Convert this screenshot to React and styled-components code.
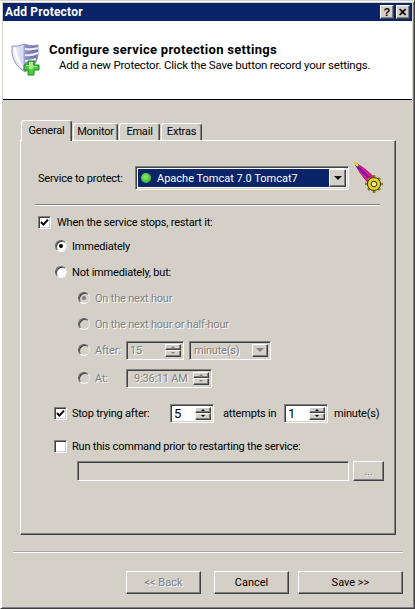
import React from "react";
import styled, { createGlobalStyle, css } from "styled-components";

const Global = createGlobalStyle`
  html, body { margin: 0; padding: 0; background: #d4d0c8; }
  * { box-sizing: border-box; }
`;

const FONT = `Roboto, "Liberation Sans", Arial, sans-serif`;
const raised = css`
  border: 1px solid;
  border-color: #fff #404040 #404040 #fff;
  box-shadow: inset -1px -1px 0 #808080;
  background: #d4d0c8;
`;
const sunken = css`
  border: 1px solid;
  border-color: #808080 #fff #fff #808080;
  box-shadow: inset 1px 1px 0 #404040, inset -1px -1px 0 #d4d0c8;
`;

const Win = styled.div`
  width: 415px;
  height: 609px;
  padding: 2px;
  background: #d4d0c8;
  border: 1px solid;
  border-color: #d4d0c8 #404040 #404040 #fff;
  box-shadow: inset 1px 1px 0 #fff, inset -1px -1px 0 #808080;
  font: 11px ${FONT};
  letter-spacing: -0.2px;
  color: #000;
  overflow: hidden;
  display: flex;
  flex-direction: column;
`;
const TitleBar = styled.div`
  height: 18px;
  flex: none;
  background: #0a246a;
  display: flex;
  align-items: center;
  padding: 0 2px;
  color: #fff;
  font: 700 12px ${FONT};
  letter-spacing: 0.2px;
`;
const TitleText = styled.span`
  flex: 1;
`;
const CapBtn = styled.span`
  ${raised}
  width: 14px;
  height: 14px;
  margin-left: 2px;
  display: flex;
  align-items: center;
  justify-content: center;
  color: #000;
  font: 700 11px "Liberation Sans", sans-serif;
`;
const Header = styled.div`
  height: 79px;
  flex: none;
  background: #fff;
  border-bottom: 1px solid #000;
  display: flex;
  padding: 21px 0 0 8px;
`;
const ShieldWrap = styled.span`
  margin-top: 1px;
  height: 33px;
  flex: none;
`;
const HeadText = styled.div`
  margin-left: 8px;
`;
const HeadTitle = styled.div`
  font-weight: 700;
  font-size: 13px;
  line-height: 16px;
  letter-spacing: 0.3px;
`;
const HeadSub = styled.div`
  margin-left: 10px;
  line-height: 14px;
  font-size: 11.5px;
`;
const Body = styled.div`
  flex: 1;
  padding: 20px 0 0 17px;
`;
const TabStrip = styled.div`
  height: 20px;
  display: flex;
  align-items: flex-end;
  position: relative;
  z-index: 1;
  padding-left: 1px;
`;
const Tab = styled.div`
  height: ${(p) => (p.$active ? 21 : 17)}px;
  width: ${(p) => p.$w}px;
  margin-right: 1px;
  margin-bottom: ${(p) => (p.$active ? -1 : 0)}px;
  background: #d4d0c8;
  border: 1px solid;
  border-color: #fff #404040 transparent #fff;
  border-bottom: none;
  border-radius: 3px 3px 0 0;
  box-shadow: inset -1px 0 0 #808080;
  display: flex;
  justify-content: center;
  align-items: center;
  line-height: 14px;
`;
const Panel = styled.div`
  width: 376px;
  height: 395px;
  border: 1px solid;
  border-color: #fff #404040 #404040 #fff;
  box-shadow: inset -1px -1px 0 #808080;
  padding: 25px 0 0 14px;
`;
const Row = styled.div`
  height: ${(p) => p.$h || 26}px;
  margin-top: ${(p) => p.$mt || 0}px;
  padding-left: ${(p) => p.$in || 0}px;
  display: flex;
  align-items: center;
  color: ${(p) => (p.$off ? "#808080" : "#000")};
  text-shadow: ${(p) => (p.$off ? "1px 1px 0 #fff" : "none")};
`;
const Label = styled.span`
  margin-left: ${(p) => p.$ml ?? 5}px;
  width: ${(p) => (p.$w ? p.$w + "px" : "auto")};
  flex: none;
  white-space: nowrap;
`;
const Combo = styled.div`
  ${sunken}
  width: 214px;
  height: 24px;
  padding: 2px;
  display: flex;
  background: #fff;
`;
const Selected = styled.div`
  flex: 1;
  background: #0a246a;
  color: #fff;
  display: flex;
  align-items: center;
  padding-left: 3px;
  letter-spacing: 0;
`;
const Dot = styled.span`
  width: 10px;
  height: 10px;
  border-radius: 50%;
  margin-right: 6px;
  background: radial-gradient(circle at 45% 40%, #8cf06a, #3cb82c 70%, #2f8f30);
`;
const Arrow = styled.span`
  ${raised}
  width: ${(p) => p.$w || 17}px;
  flex: none;
  align-self: stretch;
  display: flex;
  align-items: center;
  justify-content: center;
  &::after {
    content: "";
    border: 4px solid transparent;
    border-top-color: ${(p) => (p.$off ? "#808080" : "#000")};
    border-bottom: 0;
  }
`;
const FeatherWrap = styled.span`
  margin-left: 3px;
  height: 34px;
  align-self: flex-start;
  margin-top: -5px;
`;
const Sep = styled.div`
  width: 345px;
  height: 2px;
  margin-top: 14px;
  background: #808080;
  border-bottom: 1px solid #fff;
`;
const Check = styled.span`
  ${sunken}
  width: 13px;
  height: 13px;
  flex: none;
  background: #fff;
  display: flex;
`;
const RadioWrap = styled.span`
  width: 12px;
  height: 12px;
  flex: none;
  border-radius: 50%;
  border: 1px solid;
  border-color: #606060 #e8e8e8 #fff #606060;
  background: ${(p) => (p.$off ? "#d4d0c8" : "#fff")};
  box-shadow: inset 1px 1px 0 #404040;
  display: flex;
  align-items: center;
  justify-content: center;
  &::after {
    content: "";
    width: 4px;
    height: 4px;
    border-radius: 50%;
    background: ${(p) => (p.$on ? (p.$off ? "#808080" : "#000") : "transparent")};
  }
`;
const Spin = styled.div`
  ${sunken}
  width: ${(p) => p.$w}px;
  height: ${(p) => p.$h || 19}px;
  padding: 2px 2px 2px ${(p) => p.$pl || 3}px;
  display: flex;
  align-items: center;
  flex: none;
  background: ${(p) => (p.$off ? "#d4d0c8" : "#fff")};
`;
const SpinVal = styled.span`
  flex: 1;
  font-size: ${(p) => p.$fs || 11}px;
`;
const SpinBtns = styled.span`
  width: 16px;
  height: 100%;
  display: flex;
  flex-direction: column;
  flex: none;
`;
const SpinBtn = styled.span`
  ${raised}
  flex: 1;
  display: flex;
  align-items: center;
  justify-content: center;
  &::after {
    content: "";
    border: 2.5px solid transparent;
    ${(p) => (p.$up ? "border-top:0;border-bottom-color:" : "border-bottom:0;border-top-color:")}${(p) => (p.$off ? "#808080" : "#000")};
  }
`;
const Drop = styled.div`
  ${sunken}
  width: 82px;
  height: 19px;
  margin-left: 5px;
  padding: 2px 2px 2px 4px;
  display: flex;
  align-items: center;
  flex: none;
`;
const DropVal = styled.span`
  flex: 1;
`;
const PathBox = styled.div`
  ${sunken}
  width: 272px;
  height: 20px;
`;
const Btn = styled.button`
  ${raised}
  width: ${(p) => p.$w}px;
  height: ${(p) => p.$h || 23}px;
  margin-left: ${(p) => p.$ml || 0}px;
  padding: 0;
  font: 11px ${FONT};
  color: ${(p) => (p.disabled ? "#808080" : "#000")};
  text-shadow: ${(p) => (p.disabled ? "1px 1px 0 #fff" : "none")};
`;
const FootSep = styled.div`
  width: 390px;
  height: 2px;
  margin: 16px 0 0 -7px;
  background: #a8a49c;
  border-bottom: 1px solid #fff;
`;
const Foot = styled.div`
  display: flex;
  margin: 18px 0 0 106px;
`;

const Shield = () => (
  <svg width="30" height="33" viewBox="0 0 30 33">
    <defs>
      <linearGradient id="sh" x1="0" x2="1" y1="0" y2="0">
        <stop offset="0" stopColor="#f0f2fa" />
        <stop offset="0.42" stopColor="#d4d8f0" />
        <stop offset="0.5" stopColor="#8f93c6" />
        <stop offset="1" stopColor="#6c6ea6" />
      </linearGradient>
    </defs>
    <path d="M1 3 Q8 4 13 1 Q20 4 27 2 L27 12 Q26 23 14 29 Q3 23 1 10 Z" fill="url(#sh)" stroke="#8e94b4" />
    <path d="M14 6 Q20 7 27 5 M14 12 Q20 13 27 10 M14 18 Q20 18 25 16" stroke="#eceef8" strokeWidth="2.2" fill="none" />
    <path d="M4 5 Q5 16 12 25" stroke="#fff" strokeWidth="2" fill="none" />
    <path d="M17 18h6v4h5v5h-5v5h-6v-5h-4v-5h4z" fill="#4fcb3c" stroke="#1f8a22" />
    <path d="M18 19h4v4h4v1h-4v2h-4v-3h-3v-1h3z" fill="#a8ee90" />
  </svg>
);

const Feather = () => (
  <svg width="34" height="34" viewBox="0 0 34 34">
    <path d="M2 1 Q12 6 23 17 L17 23 Q7 12 2 1Z" fill="#e8178a" stroke="#a81060" strokeWidth="0.8" />
    <path d="M4 4 Q11 11 20 20" stroke="#5a20b0" strokeWidth="2" fill="none" />
    <path d="M2 1 L6 5" stroke="#e8d040" strokeWidth="2.4" />
    <path d="M22 14v3M22 29v3M13 23h3M28 23h3M16 17l2 2M26 27l2 2M28 17l-2 2M18 27l-2 2" strokeWidth="2.6" stroke="#8a7c10" />
    <circle cx="22" cy="23" r="6.5" fill="#e6d21e" stroke="#3a3208" />
    <circle cx="22" cy="23" r="2.8" fill="#fff6a8" stroke="#3a3208" />
  </svg>
);

const Tick = () => (
  <svg width="11" height="11" viewBox="0 0 11 11">
    <path d="M2 5 L4.4 7.6 L9 2.6" fill="none" stroke="#000" strokeWidth="2" />
  </svg>
);

const SpinStack = ({ off }) => (
  <SpinBtns>
    <SpinBtn $up $off={off} />
    <SpinBtn $off={off} />
  </SpinBtns>
);

export default function App() {
  return (
    <Win>
      <Global />
      <TitleBar>
        <TitleText>Add Protector</TitleText>
        <CapBtn>?</CapBtn>
        <CapBtn>✕</CapBtn>
      </TitleBar>
      <Header>
        <ShieldWrap><Shield /></ShieldWrap>
        <HeadText>
          <HeadTitle>Configure service protection settings</HeadTitle>
          <HeadSub>Add a new Protector. Click the Save button record your settings.</HeadSub>
        </HeadText>
      </Header>
      <Body>
        <TabStrip>
          <Tab $active $w={51}>General</Tab>
          <Tab $w={45}>Monitor</Tab>
          <Tab $w={41}>Email</Tab>
          <Tab $w={41}>Extras</Tab>
        </TabStrip>
        <Panel>
          <Row $h={24} $in={3}>
            <Label $ml={0} $w={97}>Service to protect:</Label>
            <Combo>
              <Selected>
                <Dot />
                Apache Tomcat 7.0 Tomcat7
              </Selected>
              <Arrow />
            </Combo>
            <FeatherWrap><Feather /></FeatherWrap>
          </Row>
          <Sep />
          <Row $mt={4} $h={24} $in={3}>
            <Check><Tick /></Check>
            <Label $ml={6}>When the service stops, restart it:</Label>
          </Row>
          <Row $in={20} $h={24}>
            <RadioWrap $on />
            <Label>Immediately</Label>
          </Row>
          <Row $in={20} $mt={1}>
            <RadioWrap />
            <Label>Not immediately, but:</Label>
          </Row>
          <Row $in={43} $off>
            <RadioWrap $on $off />
            <Label>On the next hour</Label>
          </Row>
          <Row $in={43} $off>
            <RadioWrap $off />
            <Label>On the next hour or half-hour</Label>
          </Row>
          <Row $in={43} $off>
            <RadioWrap $off />
            <Label $w={31}>After:</Label>
            <Spin $off $w={58}>
              <SpinVal>15</SpinVal>
              <SpinStack off />
            </Spin>
            <Drop>
              <DropVal>minute(s)</DropVal>
              <Arrow $off $w={16} />
            </Drop>
          </Row>
          <Row $in={43} $off $mt={2}>
            <RadioWrap $off />
            <Label $w={31}>At:</Label>
            <Spin $off $w={86} $pl={7}>
              <SpinVal>9:36:11 AM</SpinVal>
              <SpinStack off />
            </Spin>
          </Row>
          <Row $in={19} $mt={9}>
            <Check><Tick /></Check>
            <Label $w={98}>Stop trying after:</Label>
            <Spin $w={44}>
              <SpinVal $fs={13}>5</SpinVal>
              <SpinStack />
            </Spin>
            <Label $ml={9} $w={61}>attempts in</Label>
            <Spin $w={44}>
              <SpinVal $fs={13}>1</SpinVal>
              <SpinStack />
            </Spin>
            <Label $ml={6}>minute(s)</Label>
          </Row>
          <Row $in={19} $mt={7}>
            <Check />
            <Label>Run this command prior to restarting the service:</Label>
          </Row>
          <Row $in={42} $h={20} $mt={2}>
            <PathBox />
            <Btn disabled $w={31} $h={20} $ml={4}>...</Btn>
          </Row>
        </Panel>
        <FootSep />
        <Foot>
          <Btn disabled $w={75}>&lt;&lt; Back</Btn>
          <Btn $w={75} $ml={13}>Cancel</Btn>
          <Btn $w={105} $ml={9}>Save &gt;&gt;</Btn>
        </Foot>
      </Body>
    </Win>
  );
}
